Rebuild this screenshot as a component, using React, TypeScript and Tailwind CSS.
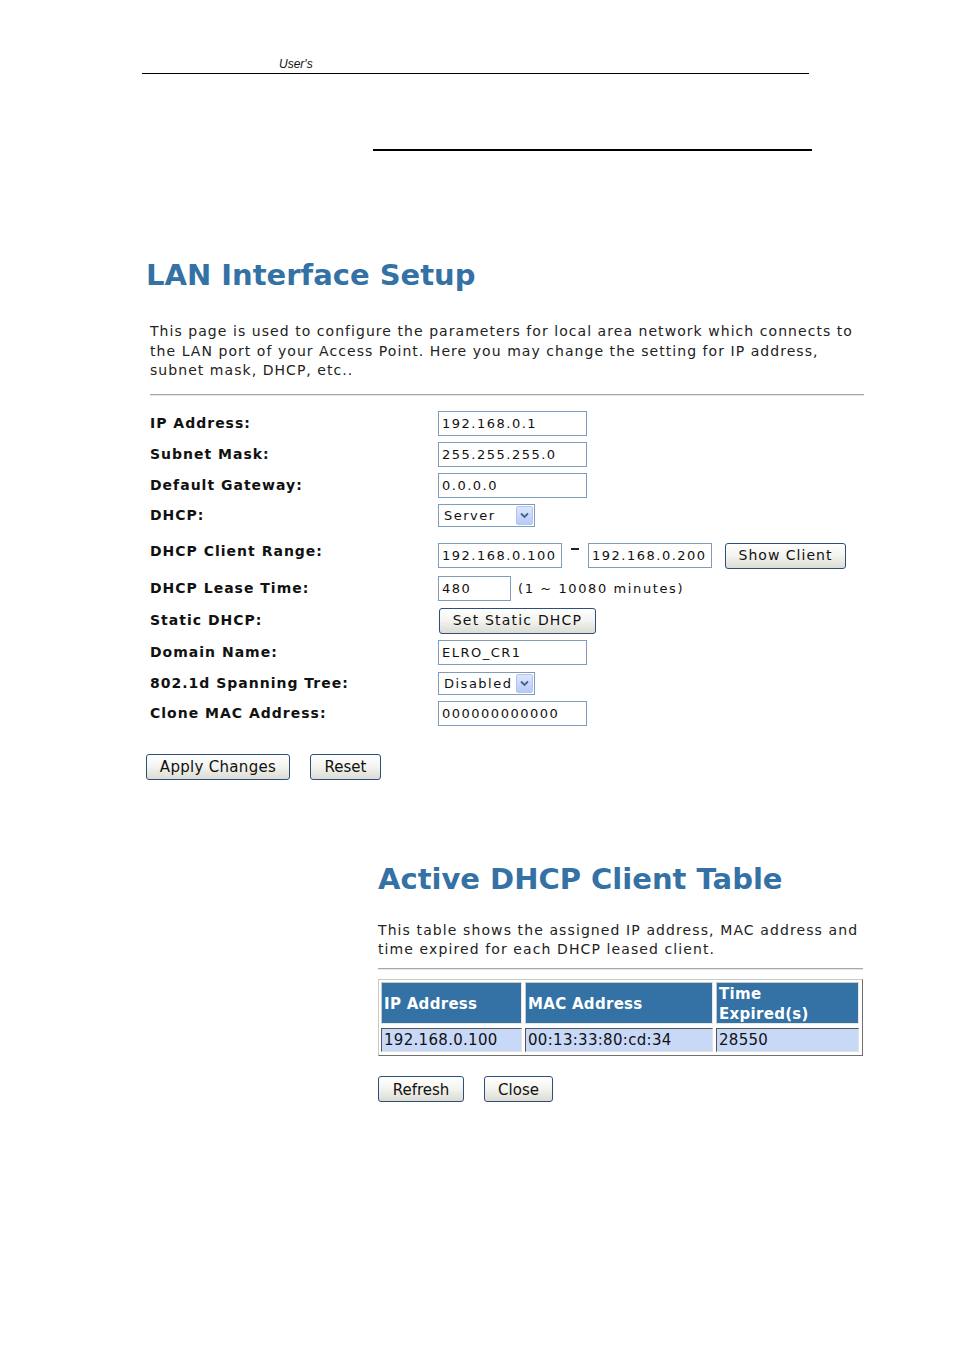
import React from "react";

const F = "font-['DejaVu_Sans',sans-serif]";

function TextBox({ value, w }: { value: string; w: string }) {
  return (
    <div
      className={`${w} h-[25px] border border-[#7f9db9] bg-white flex items-center pl-[3px] text-[13px] tracking-[1.5px] text-[#111] whitespace-nowrap overflow-hidden`}
    >
      {value}
    </div>
  );
}

function Select({ value }: { value: string }) {
  return (
    <div className="w-[97px] h-[23px] border border-[#7f9db9] bg-white flex items-center justify-between pl-[5px] pr-[1px] text-[13px] tracking-[1.5px] text-[#111]">
      <span>{value}</span>
      <span className="w-[17px] h-[19px] bg-linear-to-b from-[#dbe6fd] to-[#b6cbf8] border border-[#b3c6ee] rounded-[2px] flex items-center justify-center">
        <svg width="9" height="7" viewBox="0 0 9 7">
          <path d="M1 1.5 L4.5 5 L8 1.5" fill="none" stroke="#4d6185" strokeWidth="1.8" />
        </svg>
      </span>
    </div>
  );
}

function Btn({ label, w, cls = "" }: { label: string; w: string; cls?: string }) {
  return (
    <div
      className={`${w} h-[26px] rounded-[3px] border border-[#2c4f7c] bg-linear-to-b from-[#ffffff] via-[#f3f3ef] to-[#dcdcd4] flex items-center justify-center text-[#111] whitespace-nowrap ${cls}`}
    >
      {label}
    </div>
  );
}

function Label({ children, cls = "" }: { children: React.ReactNode; cls?: string }) {
  return (
    <div className={`w-[288px] shrink-0 font-bold text-[14px] tracking-[1px] text-[#111] ${cls}`}>
      {children}
    </div>
  );
}

export default function App() {
  return (
    <div className={`w-[954px] h-[1350px] bg-white overflow-hidden ${F}`}>
      {/* page header */}
      <div className="ml-[142px] w-[667px] h-[74px] border-b border-black">
        <div className="pt-[57px] pl-[137px] font-['Liberation_Sans',sans-serif] italic text-[12px] leading-[14px] text-[#111]">
          User's
        </div>
      </div>
      <div className="ml-[373px] w-[439px] h-[2px] bg-black mt-[75px]" />

      {/* LAN Interface Setup */}
      <h1 className="ml-[146px] mt-[107px] text-[29px] leading-[34px] font-bold text-[#3471a4] whitespace-nowrap">
        LAN Interface Setup
      </h1>
      <p className="ml-[150px] mt-[30px] text-[14px] leading-[19.5px] tracking-[1.05px] text-[#222] whitespace-nowrap">
        This page is used to configure the parameters for local area network which connects to
        <br />
        the LAN port of your Access Point. Here you may change the setting for IP address,
        <br />
        subnet mask, DHCP, etc..
      </p>
      <div className="ml-[150px] w-[714px] mt-[13px] border-t border-[#a8a8a8] border-b border-b-[#e6e6e6]" />

      <div className="ml-[150px] mt-[15px]">
        <div className="flex items-center h-[26px]">
          <Label>IP Address:</Label>
          <TextBox value="192.168.0.1" w="w-[149px]" />
        </div>
        <div className="flex items-center h-[26px] mt-[5px]">
          <Label>Subnet Mask:</Label>
          <TextBox value="255.255.255.0" w="w-[149px]" />
        </div>
        <div className="flex items-center h-[26px] mt-[5px]">
          <Label>Default Gateway:</Label>
          <TextBox value="0.0.0.0" w="w-[149px]" />
        </div>
        <div className="flex items-center h-[26px] mt-[4px]">
          <Label>DHCP:</Label>
          <Select value="Server" />
        </div>
        <div className="flex items-center h-[26px] mt-[14px]">
          <Label cls="self-start leading-[16px] pt-[0px]">DHCP Client Range:</Label>
          <TextBox value="192.168.0.100" w="w-[124px]" />
          <div className="w-[26px] flex justify-center self-start pt-[5px]">
            <div className="w-[8px] h-[2px] bg-[#222]" />
          </div>
          <TextBox value="192.168.0.200" w="w-[124px]" />
          <Btn label="Show Client" w="w-[121px]" cls="ml-[13px] text-[14px] tracking-[1px]" />
        </div>
        <div className="flex items-center h-[26px] mt-[7px]">
          <Label>DHCP Lease Time:</Label>
          <TextBox value="480" w="w-[73px]" />
          <span className="ml-[7px] text-[13px] tracking-[1.6px] text-[#111] whitespace-nowrap">
            (1 ~ 10080 minutes)
          </span>
        </div>
        <div className="flex items-center h-[26px] mt-[6px]">
          <Label>Static DHCP:</Label>
          <Btn label="Set Static DHCP" w="w-[157px]" cls="ml-[1px] text-[14px] tracking-[1.2px]" />
        </div>
        <div className="flex items-center h-[26px] mt-[6px]">
          <Label>Domain Name:</Label>
          <TextBox value="ELRO_CR1" w="w-[149px]" />
        </div>
        <div className="flex items-center h-[26px] mt-[5px]">
          <Label>802.1d Spanning Tree:</Label>
          <Select value="Disabled" />
        </div>
        <div className="flex items-center h-[26px] mt-[4px]">
          <Label>Clone MAC Address:</Label>
          <TextBox value="000000000000" w="w-[149px]" />
        </div>
      </div>

      <div className="ml-[146px] mt-[27px] flex gap-[20px]">
        <Btn label="Apply Changes" w="w-[144px]" cls="text-[15px] tracking-[0.3px] pt-[1px]" />
        <Btn label="Reset" w="w-[71px]" cls="text-[15px] pt-[1px]" />
      </div>

      {/* Active DHCP Client Table */}
      <div className="ml-[378px] mt-[82px]">
        <h2 className="text-[29px] leading-[34px] font-bold text-[#3471a4] whitespace-nowrap">
          Active DHCP Client Table
        </h2>
        <p className="mt-[25px] text-[14px] leading-[19.5px] tracking-[1.1px] text-[#222] whitespace-nowrap">
          This table shows the assigned IP address, MAC address and
          <br />
          time expired for each DHCP leased client.
        </p>
        <div className="w-[485px] mt-[8px] border-t border-[#a8a8a8] border-b border-b-[#e6e6e6]" />

        <div className="w-[485px] mt-[9px] border border-[#c8c8c8] border-r-[#6e6e6e] border-b-[#6e6e6e] pt-[2px] pl-[2px] pr-[3px] pb-[3px]">
          <div className="grid grid-cols-[141px_188px_143px] gap-x-[3px] gap-y-[4px]">
            {["IP Address", "MAC Address"].map((h) => (
              <div
                key={h}
                className="h-[42px] bg-[#3471a4] border border-[#c9c9c9] border-r-[#e8e8e8] border-b-[#e8e8e8] flex items-center pl-[2px] pt-[3px] text-white font-bold text-[15px] leading-[20px] tracking-[0.3px]"
              >
                {h}
              </div>
            ))}
            <div className="h-[42px] bg-[#3471a4] border border-[#c9c9c9] border-r-[#e8e8e8] border-b-[#e8e8e8] flex items-center pl-[2px] pt-[2px] text-white font-bold text-[15px] leading-[20px] tracking-[0.3px]">
              Time
              <br />
              Expired(s)
            </div>
            {["192.168.0.100", "00:13:33:80:cd:34", "28550"].map((d) => (
              <div
                key={d}
                className="h-[24px] bg-[#c8d9f8] border border-[#555555] border-r-[#e2e2e2] border-b-[#e2e2e2] flex items-center pl-[2px] pt-[1px] text-[#111] text-[15px] tracking-[0.3px] whitespace-nowrap"
              >
                {d}
              </div>
            ))}
          </div>
        </div>

        <div className="mt-[20px] flex gap-[20px]">
          <Btn label="Refresh" w="w-[86px]" cls="text-[15px] pt-[3px]" />
          <Btn label="Close" w="w-[69px]" cls="text-[15px] pt-[3px]" />
        </div>
      </div>
    </div>
  );
}
